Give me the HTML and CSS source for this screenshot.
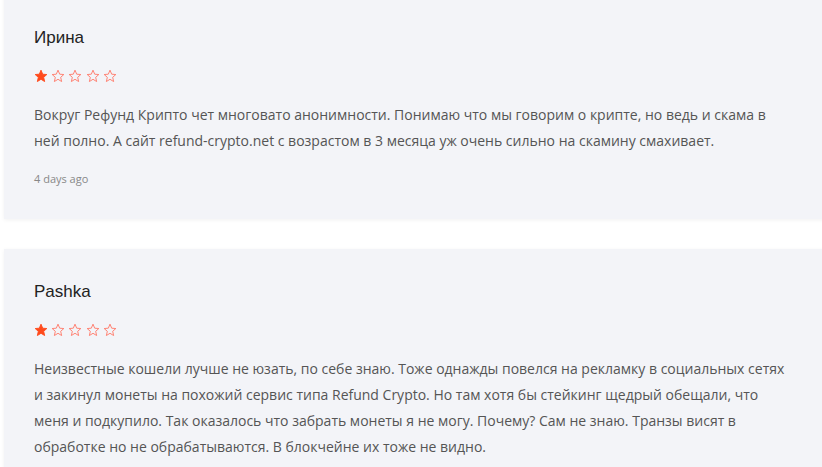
FILE: index.html
```html
<!DOCTYPE html>
<html lang="ru">
<head>
<meta charset="utf-8">
<link rel="stylesheet" href="styles.css">
</head>
<body>
<div class="reviews">
  <div class="review">
    <div class="name">Ирина</div>
    <div class="stars">
      <svg class="star full" viewBox="0 0 24 24"><path d="M12 2l2.9 6.9 7.1.6-5.4 4.7 1.6 7.3L12 17.6 5.8 21.5l1.6-7.3L2 9.5l7.1-.6z"/></svg>
      <svg class="star" viewBox="0 0 24 24"><path d="M12 2l2.9 6.9 7.1.6-5.4 4.7 1.6 7.3L12 17.6 5.8 21.5l1.6-7.3L2 9.5l7.1-.6z"/></svg>
      <svg class="star" viewBox="0 0 24 24"><path d="M12 2l2.9 6.9 7.1.6-5.4 4.7 1.6 7.3L12 17.6 5.8 21.5l1.6-7.3L2 9.5l7.1-.6z"/></svg>
      <svg class="star" viewBox="0 0 24 24"><path d="M12 2l2.9 6.9 7.1.6-5.4 4.7 1.6 7.3L12 17.6 5.8 21.5l1.6-7.3L2 9.5l7.1-.6z"/></svg>
      <svg class="star" viewBox="0 0 24 24"><path d="M12 2l2.9 6.9 7.1.6-5.4 4.7 1.6 7.3L12 17.6 5.8 21.5l1.6-7.3L2 9.5l7.1-.6z"/></svg>
    </div>
    <p class="text">Вокруг Рефунд Крипто чет многовато анонимности. Понимаю что мы говорим о крипте, но ведь и скама в ней полно. А сайт refund-crypto.net с возрастом в 3 месяца уж очень сильно на скамину смахивает.</p>
    <div class="date">4 days ago</div>
  </div>
  <div class="review">
    <div class="name">Pashka</div>
    <div class="stars">
      <svg class="star full" viewBox="0 0 24 24"><path d="M12 2l2.9 6.9 7.1.6-5.4 4.7 1.6 7.3L12 17.6 5.8 21.5l1.6-7.3L2 9.5l7.1-.6z"/></svg>
      <svg class="star" viewBox="0 0 24 24"><path d="M12 2l2.9 6.9 7.1.6-5.4 4.7 1.6 7.3L12 17.6 5.8 21.5l1.6-7.3L2 9.5l7.1-.6z"/></svg>
      <svg class="star" viewBox="0 0 24 24"><path d="M12 2l2.9 6.9 7.1.6-5.4 4.7 1.6 7.3L12 17.6 5.8 21.5l1.6-7.3L2 9.5l7.1-.6z"/></svg>
      <svg class="star" viewBox="0 0 24 24"><path d="M12 2l2.9 6.9 7.1.6-5.4 4.7 1.6 7.3L12 17.6 5.8 21.5l1.6-7.3L2 9.5l7.1-.6z"/></svg>
      <svg class="star" viewBox="0 0 24 24"><path d="M12 2l2.9 6.9 7.1.6-5.4 4.7 1.6 7.3L12 17.6 5.8 21.5l1.6-7.3L2 9.5l7.1-.6z"/></svg>
    </div>
    <p class="text">Неизвестные кошели лучше не юзать, по себе знаю. Тоже однажды повелся на рекламку в социальных сетях и закинул монеты на похожий сервис типа Refund Crypto. Но там хотя бы стейкинг щедрый обещали, что меня и подкупило. Так оказалось что забрать монеты я не могу. Почему? Сам не знаю. Транзы висят в обработке но не обрабатываются. В блокчейне их тоже не видно.</p>
    <div class="date">4 days ago</div>
  </div>
</div>
</body>
</html>
```

FILE: styles.css
```css
html, body {
  margin: 0;
  padding: 0;
  background: #ffffff;
  overflow: hidden;
}

.reviews {
  margin: -5px -20px 0 4px;
  display: flex;
  flex-direction: column;
  gap: 30px;
}

.review {
  background: #f3f4f8;
  box-shadow: 0 1px 4px rgba(0, 0, 0, 0.06);
  padding: 33px 50px 32px 30px;
}

.name {
  font-family: "Liberation Sans", Arial, sans-serif;
  font-size: 17px;
  line-height: 20px;
  color: #222;
}

.stars {
  display: flex;
  gap: 3.2px;
  margin-top: 21px;
  height: 14px;
}

.star {
  width: 14px;
  height: 14px;
  fill: none;
  stroke: #ff7b6b;
  stroke-width: 1.6;
  stroke-linejoin: miter;
}

.star.full {
  fill: #ff4a1c;
  stroke: #ff4a1c;
}

.text {
  margin: 19px 0 0;
  font-family: "Open Sans", sans-serif;
  font-size: 14px;
  line-height: 26px;
  color: #555;
}

.date {
  margin-top: 17px;
  font-family: "Open Sans", sans-serif;
  font-size: 11px;
  line-height: 16px;
  color: #888;
}
```
